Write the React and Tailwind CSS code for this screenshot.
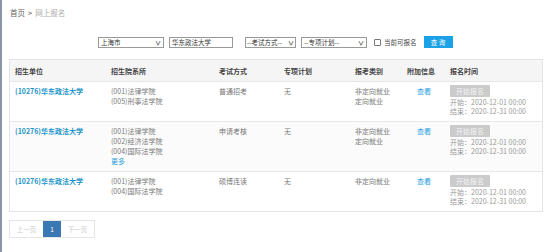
import React from "react";

const rows = [
  {
    unit: "(10276)华东政法大学",
    depts: ["(001)法律学院", "(005)刑事法学院"],
    more: false,
    mode: "普通招考",
    plan: "无",
    types: ["非定向就业", "定向就业"],
  },
  {
    unit: "(10276)华东政法大学",
    depts: ["(001)法律学院", "(002)经济法学院", "(004)国际法学院"],
    more: true,
    mode: "申请考核",
    plan: "无",
    types: ["非定向就业", "定向就业"],
  },
  {
    unit: "(10276)华东政法大学",
    depts: ["(001)法律学院", "(004)国际法学院"],
    more: false,
    mode: "硕博连读",
    plan: "无",
    types: ["非定向就业"],
  },
];

const font = { fontFamily: '"Noto Sans CJK SC", "Open Sans", sans-serif' };

const App = () => {
  return (
    <div
      className="w-[554px] h-[252px] bg-white border-l-2 border-[#8c94aa] text-[7px] leading-[10px] text-[#777] overflow-hidden"
      style={font}
    >
      {/* Breadcrumb */}
      <div className="flex items-center gap-[3px] pl-[8px] pt-[8px] text-[7.5px] leading-[10px]">
        <span className="text-[#666]">首页</span>
        <span className="text-[#666] text-[7px] font-bold">&gt;</span>
        <span className="text-[#aaa]">网上报名</span>
      </div>

      {/* Filters */}
      <div className="flex items-center mt-[18px] pl-[96px] h-[12px] text-[6.5px] leading-[9px] text-[#333]">
        <div className="w-[66px] h-[11px] border border-[#999] flex items-center justify-between px-[2px]">
          <span>上海市</span>
          <span className="text-[6px] font-bold">∨</span>
        </div>
        <div className="ml-[5px] w-[64px] h-[11px] border border-[#999] flex items-center px-[2px]">
          华东政法大学
        </div>
        <div className="ml-[12px] w-[51px] h-[11px] border border-[#999] flex items-center justify-between px-[1px]">
          <span>--考试方式--</span>
          <span className="text-[6px] font-bold">∨</span>
        </div>
        <div className="ml-[5px] w-[66px] h-[11px] border border-[#999] flex items-center justify-between px-[2px]">
          <span>--专项计划--</span>
          <span className="text-[6px] font-bold">∨</span>
        </div>
        <div className="ml-[7px] w-[7px] h-[7px] border border-[#777] rounded-[1px]" />
        <span className="ml-[3px] text-[#444]">当前可报名</span>
        <div className="ml-[7px] w-[29px] h-[12px] bg-[#1ba2e6] text-white flex items-center justify-center">
          查 询
        </div>
      </div>

      {/* Table */}
      <div className="ml-[7px] mt-[11px] w-[534px] border border-[#e4e4e4]">
        <div className="flex h-[22px] items-center bg-[#f5f5f5] border-b border-[#e6e6e6] font-bold text-[7px] text-[#444]">
          <div className="w-[101px] pl-[5px]">招生单位</div>
          <div className="w-[108px]">招生院系所</div>
          <div className="w-[65px]">考试方式</div>
          <div className="w-[71px]">专项计划</div>
          <div className="w-[52px]">报考类别</div>
          <div className="w-[43px]">附加信息</div>
          <div className="flex-1">报名时间</div>
        </div>
        {rows.map((r, i) => (
          <div
            key={i}
            className={`flex pt-[3px] pb-[5px] ${i > 0 ? "border-t border-[#e8e8e8]" : ""} ${i === 1 ? "bg-[#fbfbfb]" : ""}`}
          >
            <div className="w-[101px] pl-[5px] pt-[1px] text-[#2295c9] font-bold">{r.unit}</div>
            <div className="w-[108px] pt-[1px] flex flex-col">
              {r.depts.map((d) => (
                <span key={d}>{d}</span>
              ))}
              {r.more && <span className="text-[#1ea0e0]">更多</span>}
            </div>
            <div className="w-[65px] pt-[1px]">{r.mode}</div>
            <div className="w-[71px] pt-[1px]">{r.plan}</div>
            <div className="w-[52px] pt-[1px] flex flex-col">
              {r.types.map((t) => (
                <span key={t}>{t}</span>
              ))}
            </div>
            <div className="w-[43px] pt-[1px] pl-[10px] text-[#1ea0e0]">查看</div>
            <div className="flex-1 flex flex-col items-start">
              <div className="w-[40px] h-[12px] bg-[#cbcbcb] rounded-[1px] text-[#f4f4f4] flex items-center justify-center">
                开始报名
              </div>
              <span className="mt-[1px] leading-[9px] text-[#999]">开始：2020-12-01 00:00</span>
              <span className="leading-[9px] text-[#999]">结束：2020-12-31 00:00</span>
            </div>
          </div>
        ))}
      </div>

      {/* Pagination */}
      <div className="ml-[7px] mt-[8px] flex h-[18px] border border-[#e6e6e6] w-fit text-[6.5px]">
        <div className="w-[33px] flex items-center justify-center text-[#ccc]">上一页</div>
        <div className="w-[18px] flex items-center justify-center bg-[#3a78b4] text-white">1</div>
        <div className="w-[33px] flex items-center justify-center text-[#ccc]">下一页</div>
      </div>
    </div>
  );
};

export default App;
